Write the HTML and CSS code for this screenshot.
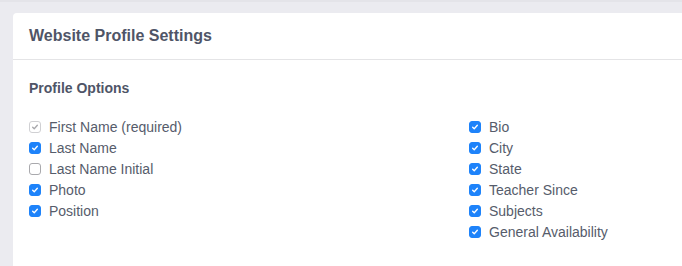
FILE: index.html
```html
<!DOCTYPE html>
<html>
<head>
<meta charset="utf-8">
<link rel="stylesheet" href="styles.css">
</head>
<body>
<div class="page">
  <div class="card">
    <div class="card-header">Website Profile Settings</div>
    <div class="card-body">
      <div class="section-title">Profile Options</div>
      <div class="columns">
        <ul class="options">
          <li><span class="cb disabled"><svg viewBox="0 0 12 12"><path d="M3.2 6.2 L5.1 8.1 L8.8 3.9" /></svg></span>First Name (required)</li>
          <li><span class="cb checked"><svg viewBox="0 0 12 12"><path d="M3.2 6.2 L5.1 8.1 L8.8 3.9" /></svg></span>Last Name</li>
          <li><span class="cb"></span>Last Name Initial</li>
          <li><span class="cb checked"><svg viewBox="0 0 12 12"><path d="M3.2 6.2 L5.1 8.1 L8.8 3.9" /></svg></span>Photo</li>
          <li><span class="cb checked"><svg viewBox="0 0 12 12"><path d="M3.2 6.2 L5.1 8.1 L8.8 3.9" /></svg></span>Position</li>
        </ul>
        <ul class="options">
          <li><span class="cb checked"><svg viewBox="0 0 12 12"><path d="M3.2 6.2 L5.1 8.1 L8.8 3.9" /></svg></span>Bio</li>
          <li><span class="cb checked"><svg viewBox="0 0 12 12"><path d="M3.2 6.2 L5.1 8.1 L8.8 3.9" /></svg></span>City</li>
          <li><span class="cb checked"><svg viewBox="0 0 12 12"><path d="M3.2 6.2 L5.1 8.1 L8.8 3.9" /></svg></span>State</li>
          <li><span class="cb checked"><svg viewBox="0 0 12 12"><path d="M3.2 6.2 L5.1 8.1 L8.8 3.9" /></svg></span>Teacher Since</li>
          <li><span class="cb checked"><svg viewBox="0 0 12 12"><path d="M3.2 6.2 L5.1 8.1 L8.8 3.9" /></svg></span>Subjects</li>
          <li><span class="cb checked"><svg viewBox="0 0 12 12"><path d="M3.2 6.2 L5.1 8.1 L8.8 3.9" /></svg></span>General Availability</li>
        </ul>
      </div>
    </div>
  </div>
</div>
</body>
</html>
```
FILE: styles.css
```css
html, body {
  margin: 0;
  padding: 0;
  background: #ebebf0;
  overflow: hidden;
}
body {
  font-family: "Liberation Sans", Arial, sans-serif;
  color: #545a6a;
}
.page {
  box-sizing: border-box;
  height: 266px;
  padding: 11px 0 0 13px;
  border-top: 2px solid #e4e4e9;
}
.card {
  height: 100%;
  background: #ffffff;
  border-radius: 4px 0 0 0;
}
.card-header {
  height: 46px;
  line-height: 46px;
  padding: 0 16px;
  font-size: 16px;
  font-weight: bold;
  color: #4f5567;
  border-bottom: 1px solid #e4e4e6;
}
.card-body {
  padding: 18px 15px 0 16px;
}
.section-title {
  font-size: 14px;
  font-weight: bold;
  line-height: 20px;
  color: #4f5567;
  margin-bottom: 18px;
}
.columns {
  display: grid;
  grid-template-columns: 440px 1fr;
}
.options {
  list-style: none;
  margin: 0;
  padding: 0;
}
.options li {
  display: flex;
  align-items: center;
  height: 21px;
  font-size: 14px;
  color: #565c6b;
}
.cb {
  box-sizing: border-box;
  width: 12px;
  height: 12px;
  margin: 0 8px 0 0;
  border: 1px solid #a9a9ad;
  border-radius: 3px;
  background: #fff;
  display: flex;
  align-items: center;
  justify-content: center;
  flex: none;
}
.cb svg {
  width: 12px;
  height: 12px;
  fill: none;
  stroke-width: 1.6;
  stroke-linecap: round;
  stroke-linejoin: round;
}
.cb.checked {
  background: #1e83fa;
  border-color: #1e83fa;
}
.cb.checked svg {
  stroke: #ffffff;
}
.cb.disabled {
  border-color: #d0d0d3;
}
.cb.disabled svg {
  stroke: #a8a8ac;
}
```
